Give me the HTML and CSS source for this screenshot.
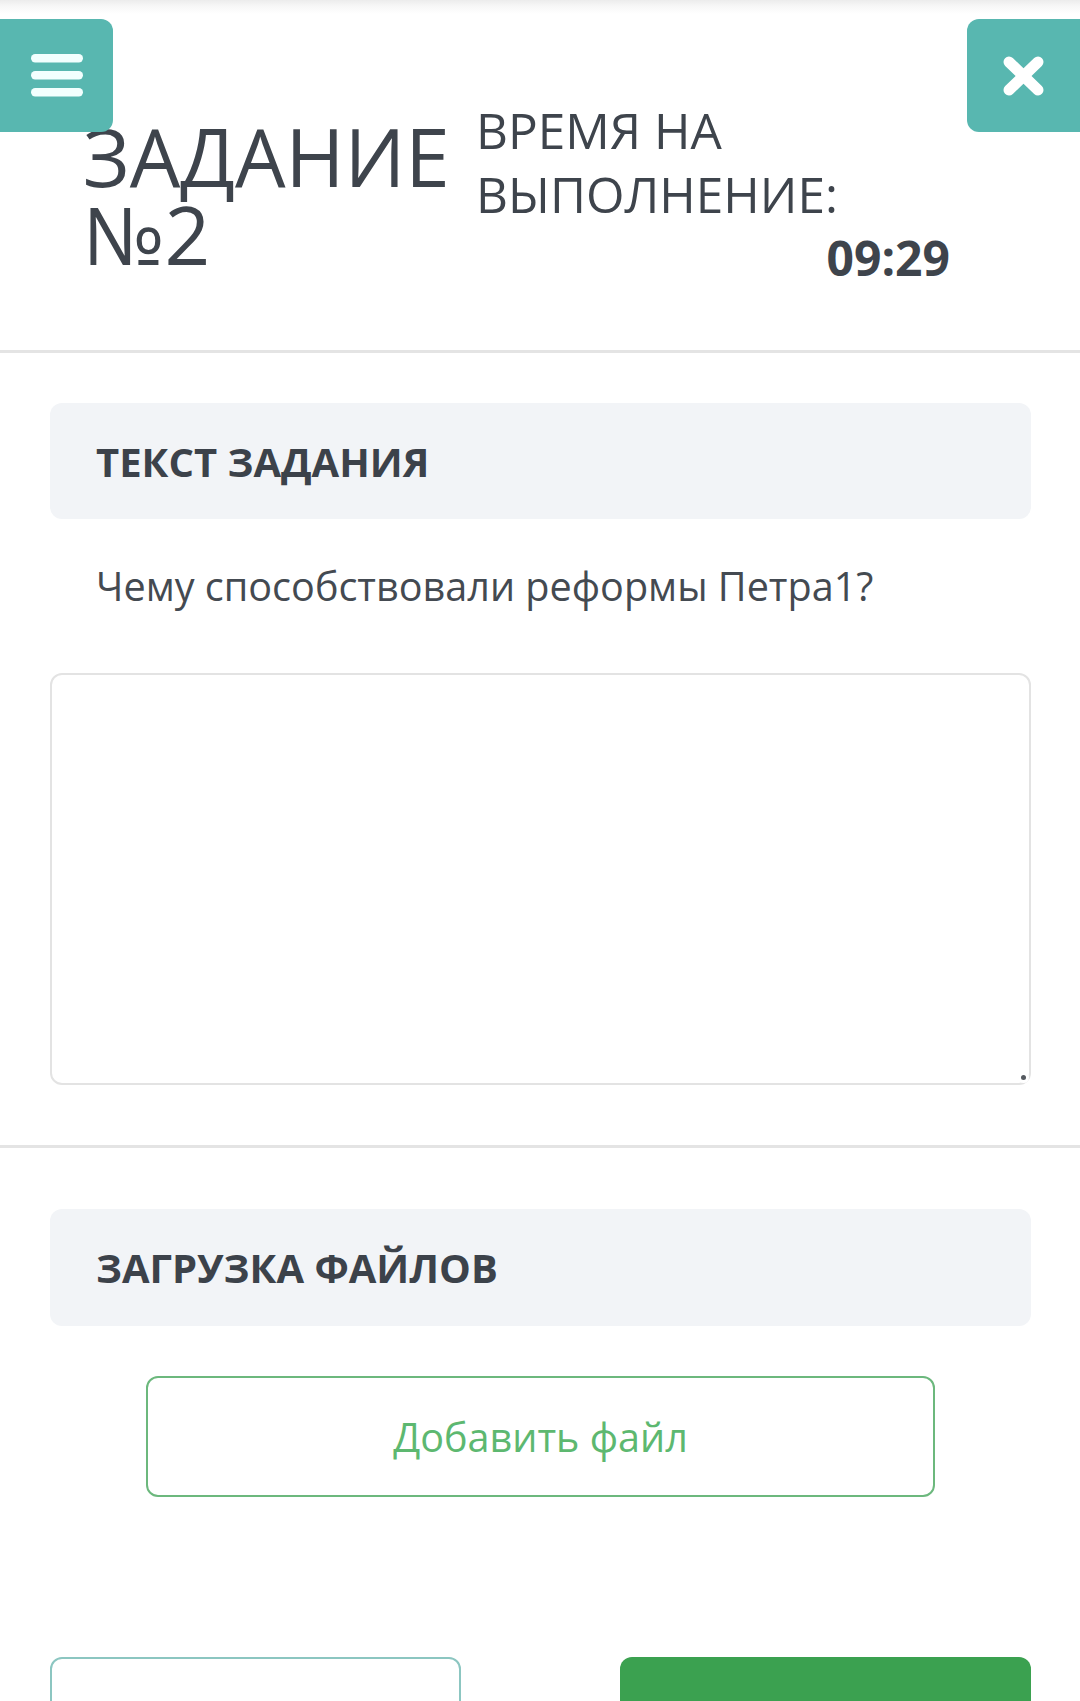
FILE: index.html
```html
<!DOCTYPE html>
<html lang="ru">
<head>
<meta charset="utf-8">
<title>Задание №2</title>
<link rel="stylesheet" href="styles.css">
</head>
<body>
<header class="task-header">
  <button class="menu-btn" type="button" aria-label="Меню">
    <svg width="52" height="43" viewBox="0 0 52 43"><g fill="#f2fffe"><rect x="0" y="0" width="52" height="8.5" rx="4.2"/><rect x="0" y="17" width="52" height="8.5" rx="4.2"/><rect x="0" y="34" width="52" height="8.5" rx="4.2"/></g></svg>
  </button>
  <button class="close-btn" type="button" aria-label="Закрыть">
    <svg width="41" height="40" viewBox="0 0 41 40"><g stroke="#ffffff" stroke-width="11" stroke-linecap="round"><line x1="6" y1="6" x2="35" y2="34"/><line x1="35" y1="6" x2="6" y2="34"/></g></svg>
  </button>
  <div class="task-head-row">
    <h1 class="task-title">ЗАДАНИЕ №2</h1>
    <div class="task-timer">
      <div class="timer-label">ВРЕМЯ НА ВЫПОЛНЕНИЕ:</div>
      <div class="timer-value">09:29</div>
    </div>
  </div>
</header>

<section class="task-section">
  <div class="section-head">ТЕКСТ ЗАДАНИЯ</div>
  <p class="question">Чему способствовали реформы Петра1?</p>
  <div class="answer-wrap">
    <textarea class="answer"></textarea>
  </div>
</section>

<section class="upload-section">
  <div class="section-head">ЗАГРУЗКА ФАЙЛОВ</div>
  <button class="add-file" type="button">Добавить файл</button>
  <div class="nav-row">
    <button class="btn-prev" type="button">Назад</button>
    <button class="btn-next" type="button">Далее</button>
  </div>
</section>
</body>
</html>
```
FILE: styles.css
```css
html, body {
  margin: 0;
  padding: 0;
  background: #ffffff;
}

body {
  font-family: "Open Sans", "Noto Sans", sans-serif;
  color: #3e444c;
  overflow: hidden;
}

button {
  font-family: inherit;
  cursor: pointer;
}

.task-header {
  position: relative;
  box-sizing: border-box;
  height: 353px;
  padding: 99px 0 0 83px;
  border-bottom: 3px solid #e4e4e4;
  background: linear-gradient(to bottom, #ececec 0, #f7f7f7 6px, #ffffff 14px);
}

.menu-btn,
.close-btn {
  position: absolute;
  top: 19px;
  width: 113px;
  height: 113px;
  border: none;
  padding: 0;
  background: #58b7b0;
  display: flex;
  align-items: center;
  justify-content: center;
}

.menu-btn {
  left: 0;
  border-radius: 0 12px 12px 0;
  z-index: 2;
}

.close-btn {
  right: 0;
  border-radius: 12px 0 0 12px;
  z-index: 2;
}

.task-head-row {
  display: flex;
  align-items: flex-start;
}

.task-title {
  margin: 18px 0 0;
  width: 393px;
  font-size: 80px;
  font-weight: 400;
  line-height: 78px;
  color: #3e444c;
}

.task-timer {
  width: 474px;
  font-size: 49.5px;
  line-height: 63.5px;
  color: #3e444c;
}

.timer-value {
  text-align: right;
  font-weight: 700;
  font-size: 48px;
}

.task-section {
  padding: 50px 49px 60px 50px;
  border-bottom: 3px solid #e4e4e4;
}

.section-head {
  box-sizing: border-box;
  height: 116px;
  display: flex;
  align-items: center;
  padding: 0 0 0 46px;
  background: #f2f4f7;
  border-radius: 12px;
  font-size: 40px;
  font-weight: 700;
  color: #3c424a;
}

.question {
  margin: 37px 0 0 46px;
  font-size: 39.6px;
  line-height: 60px;
  color: #444a51;
}

.answer-wrap {
  position: relative;
  margin-top: 57px;
}

.answer {
  display: block;
  box-sizing: border-box;
  width: 100%;
  height: 412px;
  border: 2px solid #e3e3e3;
  border-radius: 12px;
  resize: none;
  background: #ffffff;
  font-family: inherit;
  font-size: 36px;
}

.answer-wrap::after {
  content: "";
  position: absolute;
  right: 5px;
  bottom: 5px;
  width: 5px;
  height: 5px;
  border-radius: 50%;
  background: #555a60;
  box-shadow: 0 0 0 3px #ffffff;
}

.upload-section {
  padding: 61px 49px 0 50px;
}

.upload-section .section-head {
  height: 117px;
}

.add-file {
  display: block;
  box-sizing: border-box;
  width: 789px;
  height: 121px;
  margin: 50px auto 0;
  border: 2px solid #6cb87d;
  border-radius: 12px;
  background: #ffffff;
  color: #5db870;
  font-size: 39.6px;
}

.nav-row {
  display: flex;
  justify-content: space-between;
  margin-top: 160px;
}

.btn-prev,
.btn-next {
  box-sizing: border-box;
  width: 411px;
  height: 121px;
  border-radius: 12px;
  font-size: 40px;
  padding-top: 40px;
}

.btn-prev {
  border: 2px solid #8cc6c1;
  background: #ffffff;
  color: #3e444c;
}

.btn-next {
  border: none;
  background: #3ba150;
  color: #ffffff;
}
```
